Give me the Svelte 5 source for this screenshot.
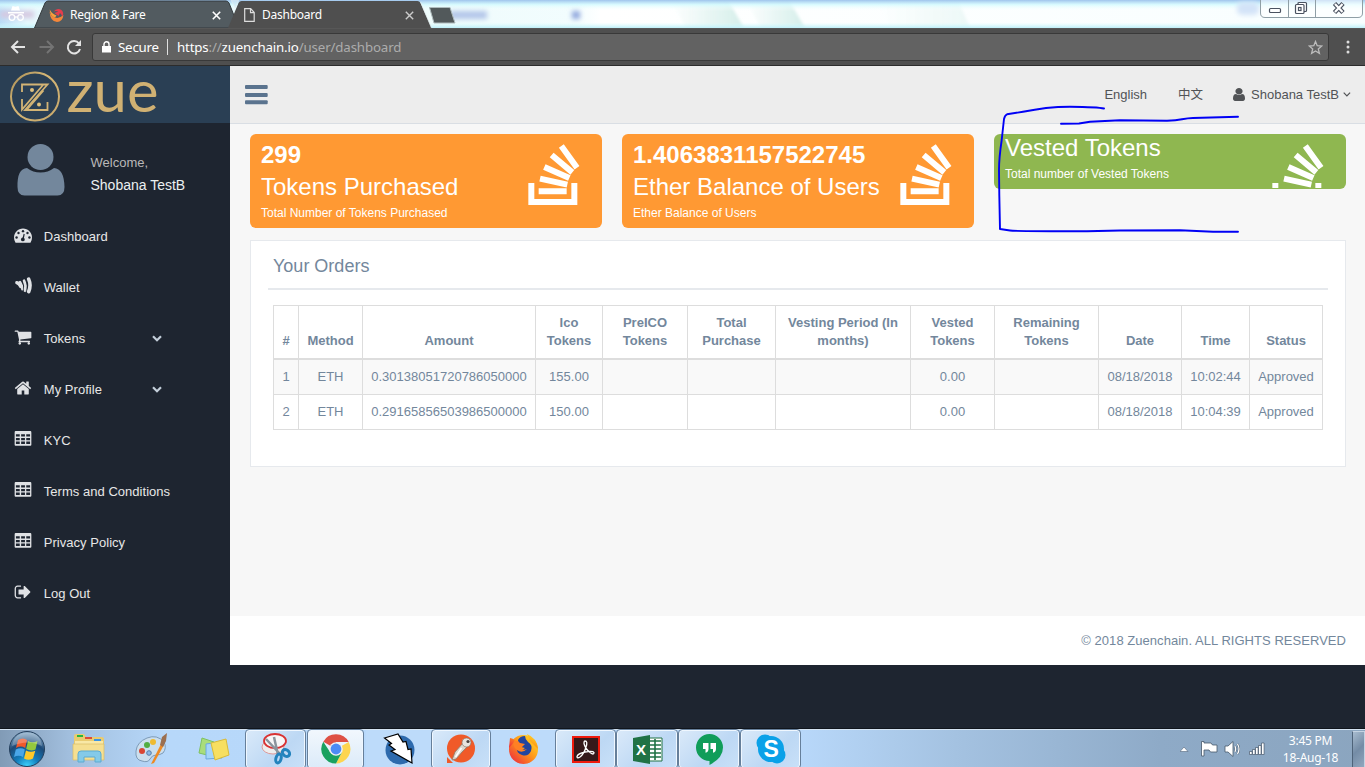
<script>
  const menu = [
    { label: 'Dashboard', icon: 'dash' },
    { label: 'Wallet', icon: 'wallet' },
    { label: 'Tokens', icon: 'cart', more: true },
    { label: 'My Profile', icon: 'home', more: true },
    { label: 'KYC', icon: 'table' },
    { label: 'Terms and Conditions', icon: 'table' },
    { label: 'Privacy Policy', icon: 'table' },
    { label: 'Log Out', icon: 'out' }
  ];
  const cards = [
    { value: '299', title: 'Tokens Purchased', note: 'Total Number of Tokens Purchased' },
    { value: '1.4063831157522745', title: 'Ether Balance of Users', note: 'Ether Balance of Users' },
    { title: 'Vested Tokens', note: 'Total number of Vested Tokens', green: true }
  ];
  const columns = [
    ['#', 26], ['Method', 64], ['Amount', 173], ['Ico Tokens', 67], ['PreICO Tokens', 85], ['Total Purchase', 88],
    ['Vesting Period (In months)', 135], ['Vested Tokens', 84], ['Remaining Tokens', 104], ['Date', 83], ['Time', 68], ['Status', 73]
  ];
  const rows = [
    ['1', 'ETH', '0.30138051720786050000', '155.00', '', '', '', '0.00', '', '08/18/2018', '10:02:44', 'Approved'],
    ['2', 'ETH', '0.29165856503986500000', '150.00', '', '', '', '0.00', '', '08/18/2018', '10:04:39', 'Approved']
  ];
  const userPath = 'M1536 1399q0 109-62.5 187t-150.5 78h-854q-88 0-150.5-78t-62.5-187q0-85 8.5-160.5t31.5-152 58.5-131 94-89 134.5-34.5q131 128 313 128t313-128q76 0 134.5 34.5t94 89 58.5 131 31.5 152 8.5 160.5zm-256-887q0 159-112.5 271.5t-271.5 112.5-271.5-112.5-112.5-271.5 112.5-271.5 271.5-112.5 271.5 112.5 112.5 271.5z';
</script>

<div class="screen">
  <div class="strip">
    <svg class="shapes" width="1365" height="28" viewBox="0 0 1365 28">
      <defs>
        <linearGradient id="sky" x1="0" x2="1" y1="0" y2="0">
          <stop offset="0" stop-color="#b9dcf7" /><stop offset=".02" stop-color="#e6f8fd" /><stop offset=".3" stop-color="#eefbfb" />
          <stop offset=".42" stop-color="#f2fdfe" /><stop offset=".44" stop-color="#fff" /><stop offset="1" stop-color="#f8feff" />
        </linearGradient>
        <linearGradient id="edge" x1="0" x2="0" y1="0" y2="1">
          <stop offset="0" stop-color="#9fc4ec" /><stop offset=".17" stop-color="#d2fbff" stop-opacity=".8" /><stop offset=".4" stop-color="#fff" stop-opacity="0" />
          <stop offset=".8" stop-color="#d8ffff" stop-opacity="0" /><stop offset="1" stop-color="#bdeef8" />
        </linearGradient>
        <linearGradient id="ray" x1="0" x2="1" y1="0" y2="0"><stop offset="0" stop-color="#d5eeea" stop-opacity="0" /><stop offset="1" stop-color="#d5eeea" /></linearGradient>
        <filter id="soft" x="-20%" y="-60%" width="140%" height="220%"><feGaussianBlur stdDeviation="2.4" /></filter>
        <filter id="haze"><feGaussianBlur stdDeviation="1.5" /></filter>
      </defs>
      <rect width="1365" height="28" fill="url(#sky)" />
      <g filter="url(#haze)"><path d="M670 0h58l16 28h-58z" fill="url(#ray)" /><path d="M745 0h44l16 28h-44z" fill="url(#ray)" /><path d="M878 0l12 28h80L958 0z" fill="url(#ray)" opacity=".4" /></g>
      <rect width="1365" height="28" fill="url(#edge)" />
      <g filter="url(#soft)"><rect x="450" y="11" width="37" height="8" fill="#b3c6e9" /><rect x="572" y="11" width="8" height="8" fill="#8fa6dd" /><rect x="0" y="11" width="34" height="7" fill="#d5c8e0" /><rect x="1237" y="2" width="22" height="13" rx="5" fill="#d3e3f8" /></g>
      <path d="M34.500 28 45 3q1-2 3-2h178q2 0 3 2l10 25z" fill="#525b60" stroke="#33393c" />
      <path d="M228 28 238.500 3q1-2 3-2h176q2 0 3 2l11 25z" fill="#4f4f4f" />
      <path d="M231 0l4.500 8 3-8zM420.500 2 431.500 28" fill="#cfe9f5" stroke="#e4eef0" stroke-width="1" opacity=".75" />
      <path d="M429.500 7.500h20.500l5 15.500h-21z" fill="#52595b" stroke="#aebbbd" />
      <g fill="#fff"><path d="M11 10.500 12.500 6l3 .8 3-.8 1.500 4.500zM8 12h16v1.500H8z" /><g fill="none" stroke="#fff" stroke-width="1.300"><circle cx="12" cy="17.500" r="2.800" /><circle cx="20.500" cy="17.500" r="2.800" /><path d="M15 17h2.500" /></g></g>
    </svg>
    <div class="tab first">
      <svg width="15" height="15" viewBox="0 0 15 15"><path d="M.5 3Q1.500 8 6 9.500q4 1.500 8.500-2.500Q13.500 14 8 14 1 13.500.5 3z" fill="#f4873a" /><path d="M.7 1.500Q3 6 7.500 7.500L6 9.500Q1 8 .7 1.500z" fill="#f8a13b" /><path d="M4.500 3.500Q8-.8 12.500 2q3 3 .7 6.500Q12.500 6 11 5l-1.500 3L5.500 5l4-1.500q-3-.8-5 0z" fill="#e63d4d" /></svg>
      <span>Region &amp; Fare</span>
      <svg class="x" width="9" height="9" viewBox="0 0 9 9"><path d="m.8.8 7.400 7.400M8.200.8.800 8.200" stroke="#fff" stroke-width="1.600" /></svg>
    </div>
    <div class="tab second">
      <svg width="11" height="14" viewBox="0 0 11 14"><path d="M.7.700h6l3.500 3.800v8.800H.7zM6.500.7v4h3.700" fill="none" stroke="#ddd" stroke-width="1.200" /></svg>
      <span>Dashboard</span>
      <svg class="x" width="9" height="9" viewBox="0 0 9 9"><path d="m.8.8 7.400 7.400M8.200.8.800 8.200" stroke="#ccc" stroke-width="1.400" /></svg>
    </div>
    <svg class="controls" width="104" height="19" viewBox="0 0 104 19">
      <path d="M.5 0v13q0 4.500 4.500 4.500h93q4.500 0 4.500-4.500V0M28.500 0v17M55.500 0v17" fill="#fff" fill-opacity=".5" stroke="#8f9fa6" />
      <rect x="9.500" y="8.500" width="11" height="4" rx="1" fill="#fff" stroke="#4a5260" stroke-width="1.200" />
      <g fill="#fff" stroke="#4a5260" stroke-width="1.200"><rect x="38" y="2.500" width="8.500" height="9" rx="1" /><rect x="35.500" y="4.500" width="8.500" height="9" rx="1" /><rect x="38.500" y="7.500" width="2.500" height="3" /></g>
      <path d="m74.500 3.500 8.500 9M83 3.500l-8.500 9" stroke="#4a5260" stroke-width="4.600" /><path d="m75 4 7.500 8M82.500 4 75 12" stroke="#fff" stroke-width="2.200" />
    </svg>
  </div>

  <div class="toolbar">
    <svg width="82" height="18" viewBox="0 0 82 18" fill="none" stroke-width="2">
      <path d="M25 9H12.500M18 3l-6 6 6 6" stroke="#e4e4e4" /><path d="M39.500 9H52M47 3l6 6-6 6" stroke="#747474" />
      <path d="M79 5.500A6.200 6.200 0 1 0 80 11" stroke="#e4e4e4" /><path d="M81 2v6h-6z" fill="#e4e4e4" />
    </svg>
    <div class="url">
      <svg width="9" height="12" viewBox="0 0 9 12"><path d="M0 5h9v6.500H0z" fill="#fff" /><path d="M2 5V3.300a2.500 2.500 0 0 1 5 0V5" fill="none" stroke="#fff" stroke-width="1.400" /></svg>
      <span class="secure">Secure</span><i></i>
      <span class="address">https<em>://</em>zuenchain.io<em>/user/dashboard</em></span>
      <svg class="star" width="15" height="15" viewBox="0 0 15 15"><path d="m7.500 1.500 1.700 4.200 4.600.3-3.500 2.900 1.100 4.400-3.900-2.400-3.900 2.400 1.100-4.400L1.200 6l4.600-.3z" fill="none" stroke="#bdbdbd" stroke-width="1.300" /></svg>
    </div>
    <svg width="4" height="14" viewBox="0 0 4 14" fill="#ddd"><circle cx="2" cy="2" r="1.500" /><circle cx="2" cy="7" r="1.500" /><circle cx="2" cy="12" r="1.500" /></svg>
  </div>

  <div class="app">
    <aside>
      <div class="brand">
        <svg width="170" height="57" viewBox="0 0 170 57">
          <defs><linearGradient id="gold" x1="0" x2="1" y1="0" y2="1"><stop offset="0" stop-color="#a88d54" /><stop offset=".4" stop-color="#d5b676" /><stop offset="1" stop-color="#c8a96b" /></linearGradient></defs>
          <circle cx="35" cy="30.500" r="24" fill="none" stroke="url(#gold)" stroke-width="2" />
          <g fill="none" stroke="#d3b475" stroke-width="1.800"><path d="M22 26v-7.500h25.500L25 44h22.500v-8M43 19 22 43.500V33" /><path d="M43.500 24.500 27 43.500" /></g>
          <g fill="#e0c17e"><circle cx="32" cy="24" r="2" /><circle cx="39" cy="38.500" r="2" /></g>
          <text x="66.500" y="46" textLength="92" lengthAdjust="spacingAndGlyphs">zue</text>
        </svg>
      </div>
      <div class="profile">
        <svg width="48" height="53" viewBox="0 0 48 53" fill="#73879c"><circle cx="23.500" cy="13" r="13" /><path d="M10 24q6 4.500 13.500 4.500T37 24q10 .5 10.500 19 0 8.500-7 8.500h-33q-7 0-7-8.500Q0 24.500 10 24z" /></svg>
        <div><p>Welcome,</p><strong>Shobana TestB</strong></div>
      </div>
      <nav>
        {#each menu as item}
          <div class="item">
            <svg class="ico" width="18" height="18" viewBox="0 0 1792 1792" fill="#e0e2e5">
              {#if item.icon === 'dash'}
                <path d="M1792 1152q0 261-141 483-19 29-54 29h-1402q-35 0-54-29-141-221-141-483 0-182 71-348t191-286 286-191 348-71 348 71 286 191 191 286 71 348z" />
                <g fill="#1e2530"><circle cx="256" cy="1152" r="120" /><circle cx="448" cy="704" r="120" /><circle cx="896" cy="512" r="120" /><circle cx="1344" cy="704" r="120" /><circle cx="1536" cy="1152" r="120" /><circle cx="880" cy="1340" r="185" /><path d="m830 1300 130-520 110 30-110 520z" /></g>
              {:else if item.icon === 'wallet'}
                <g fill="none" stroke="#e0e2e5" stroke-linecap="round"><path d="M1460 210q270 620 0 1250" stroke-width="360" /><path d="M1000 370q230 520 100 1000" stroke-width="270" /><path d="M600 500q240 330 230 720" stroke-width="240" /><path d="M270 560q240 60 390 390" stroke-width="310" /></g>
                <g fill="none" stroke="#1e2530" stroke-width="45"><path d="M1190 190q290 620 0 1350M790 360q260 500 130 1060" /></g>
              {:else if item.icon === 'cart'}
                <path d="M704 1536q0 52-38 90t-90 38-90-38-38-90 38-90 90-38 90 38 38 90zm896 0q0 52-38 90t-90 38-90-38-38-90 38-90 90-38 90 38 38 90zm128-1088v512q0 24-16.500 42.500t-40.500 21.500l-1044 122q13 60 13 70 0 16-24 64h920q26 0 45 19t19 45-19 45-45 19h-1024q-26 0-45-19t-19-45q0-11 8-31.500t16-36 21.500-40 15.500-29.500l-177-823h-204q-26 0-45-19t-19-45 19-45 45-19h256q16 0 28.500 6.500t19.500 15.500 13 24.500 8 26 5.500 29.500 4.500 26h1201q26 0 45 19t19 45z" />
              {:else if item.icon === 'home'}
                <path d="M1472 992v480q0 26-19 45t-45 19h-384v-384h-256v384h-384q-26 0-45-19t-19-45v-480q0-1 .5-3t.5-3l575-474 575 474q1 2 1 6zm223-69l-62 74q-8 9-21 11h-3q-13 0-21-7l-692-577-692 577q-12 8-24 7-13-2-21-11l-62-74q-8-10-7-23.500t11-21.500l719-599q32-26 76-26t76 26l244 204v-195q0-14 9-23t23-9h192q14 0 23 9t9 23v408l219 182q10 8 11 21.500t-7 23.500z" />
              {:else if item.icon === 'table'}
                <path fill-rule="evenodd" d="M160 110h1472q96 0 96 130v1240q0 98-96 98h-1472q-96 0-96-98v-1240q0-130 96-130zM192 430v220h380v-220zM710 430v220h380v-220zM1220 430v220h380v-220zM192 790v220h380v-220zM710 790v220h380v-220zM1220 790v220h380v-220zM192 1150v250h380v-250zM710 1150v250h380v-250zM1220 1150v250h380v-250z" />
              {:else}
                <path d="M704 1440q0 4 1 20t.5 26.500-3 23.500-10 19.500-20.500 6.500h-320q-119 0-203.500-84.500t-84.500-203.500v-704q0-119 84.500-203.500t203.500-84.500h320q13 0 22.500 9.500t9.500 22.500q0 4 1 20t.5 26.500-3 23.500-10 19.500-20.500 6.500h-320q-66 0-113 47t-47 113v704q0 66 47 113t113 47h312l11.500 1 11.500 3 8 5.500 7 9 2 13.500zm928-544q0 26-19 45l-544 544q-19 19-45 19t-45-19-19-45v-288h-448q-26 0-45-19t-19-45v-384q0-26 19-45t45-19h448v-288q0-26 19-45t45-19 45 19l544 544q19 19 19 45z" />
              {/if}
            </svg>
            <span>{item.label}</span>
            {#if item.more}<svg class="chev" width="10" height="7" viewBox="0 0 10 7"><path d="m1 1.200 4 4 4-4" fill="none" stroke="#c4cfda" stroke-width="2.200" /></svg>{/if}
          </div>
        {/each}
      </nav>
    </aside>

    <main>
      <header>
        <svg width="23" height="20" viewBox="0 0 23 20" fill="#5a738e"><rect width="22.700" height="4" rx="1" /><rect y="8" width="22.700" height="4" rx="1" /><rect y="15.300" width="22.700" height="4" rx="1" /></svg>
        <div class="links">
          <span class="en">English</span><span class="zh">中文</span>
          <span class="who"><svg width="12" height="13" viewBox="256 128 1280 1536" preserveAspectRatio="none" fill="#515356"><path d={userPath} /></svg>Shobana TestB<svg class="down" width="8" height="5" viewBox="0 0 8 5"><path d="m.7.700 3.200 3.200L7.100.7" fill="none" stroke="#515356" stroke-width="1.200" /></svg></span>
        </div>
      </header>
      <section class="content">
        <div class="cards">
          {#each cards as card}
            <div class="card" class:green={card.green}>
              <div class="words">
                {#if card.value}<b>{card.value}</b>{/if}
                <h3>{card.title}</h3>
                <p>{card.note}</p>
              </div>
              <div class="pic">
                <svg width="54" height="64" viewBox="860 54 162 192"><path d="M873 174v57h129v-57" fill="none" stroke="#fff" stroke-width="18" /><g stroke="#fff" stroke-width="18"><path d="M895 198.500h84M899 161l82 18M912 126l75 33M934 90l62 52M963 63l47 65" /></g></svg>
              </div>
            </div>
          {/each}
        </div>
        <div class="panel">
          <h2>Your Orders</h2>
          <table>
            <colgroup>{#each columns as c}<col style="width:{c[1]}px" />{/each}</colgroup>
            <thead><tr>{#each columns as c}<th>{c[0]}</th>{/each}</tr></thead>
            <tbody>{#each rows as r}<tr>{#each r as cell}<td>{cell}</td>{/each}</tr>{/each}</tbody>
          </table>
        </div>
      </section>
      <footer>© 2018 Zuenchain. ALL RIGHTS RESERVED</footer>
    </main>
  </div>

  <div class="taskbar">
    <div class="slot orb">
      <svg width="38" height="38" viewBox="0 0 38 38">
        <defs><radialGradient id="orb" cx=".5" cy="1" r=".95"><stop offset="0" stop-color="#3fd6ff" /><stop offset=".35" stop-color="#127cbb" /><stop offset=".7" stop-color="#1c4a78" /><stop offset="1" stop-color="#7fa3c2" /></radialGradient></defs>
        <circle cx="19" cy="19" r="17.500" fill="url(#orb)" stroke="#243f5c" />
        <path d="M10 10q5-3 9 0l-1.800 8q-4.500-2.800-9.200 0z" fill="#f0592b" /><path d="M20 11q4.500 2.500 9.500 0l-2 8.500q-4.500 2-9.300-.5z" fill="#94c83d" /><path d="M7.800 19.500q5-2.500 9 0L15 27q-4.500-2.500-9 0z" fill="#4aa6e8" /><path d="M18 20.500q4.500 2.500 9.300.3L25 28.500q-4.500 2.500-9 0z" fill="#ffc928" />
        <path d="M4 16Q6 3 19 2.500T34 16q-14-7-30 0z" fill="#fff" opacity=".25" />
      </svg>
    </div>
    <div class="slot">
      <svg width="34" height="32" viewBox="0 0 34 32"><path d="M2 3q0-2 2-2h8l2 3h16q2 0 2 2v20H2z" fill="#e9cb70" /><path d="M3 8h28v19H3z" fill="#f8e8a6" /><path d="M5 2h6v2H5z" fill="#25b640" /><path d="M13 4h7v2h-7z" fill="#dd4b38" /><path d="M22 6h7v2h-7z" fill="#3893e5" /><path d="M1 11h31v16H1z" fill="#f5df91" stroke="#dabc64" stroke-width=".7" /><path d="M6 29v-8q0-3 3-3h17q3 0 3 3v8h-6v-5H12v5z" fill="#84cae8" stroke="#5cabd1" /></svg>
    </div>
    <div class="slot">
      <svg width="34" height="32" viewBox="0 0 34 32"><path d="M2 18Q3 9 13 5t17 4q3 6-1 11-3 2-7 2t-6 4-8 2q-7-1-6-10z" fill="#cbdfee" stroke="#7d9bb8" /><circle cx="8" cy="18" r="3" fill="#d94634" /><circle cx="13" cy="12" r="3" fill="#52ad42" /><circle cx="19" cy="9" r="3" fill="#efbb30" /><circle cx="15" cy="20" r="2.300" fill="#8cb9e8" stroke="#567da8" /><path d="M17 31 27 11l3 1-10 18z" fill="#ed8a25" /><path d="m26 12 2-8 5-4-1 8-3 6z" fill="#9b6f50" /></svg>
    </div>
    <div class="slot">
      <svg width="34" height="30" viewBox="0 0 34 30"><path d="m5 4 12 4-3 14-12-3z" fill="#a9dd7b" stroke="#7fc262" /><path d="m9 10 14-2 2 16-16 1z" fill="#a3d5fa" stroke="#6da9df" /><path d="m14 9 15-4 3 16-14 5z" fill="#f7df60" stroke="#d8ba3a" /></svg>
    </div>
    <div class="slot btn">
      <svg width="34" height="34" viewBox="0 0 34 34"><ellipse cx="14" cy="15" rx="11" ry="7" fill="#eee" stroke="#d99" /><ellipse cx="16" cy="9" rx="11" ry="7" fill="#f7f7f7" stroke="#d93232" stroke-width="1.800" /><path d="m7 7 15 16M15 5l4 18" stroke="#8b949c" stroke-width="2.500" /><g fill="none" stroke="#2383bd" stroke-width="3"><ellipse cx="27" cy="21" rx="4" ry="3" transform="rotate(40 27 21)" /><ellipse cx="19.500" cy="26.500" rx="2.600" ry="4.500" transform="rotate(15 19.500 26.500)" /></g></svg>
    </div>
    <div class="slot btn on">
      <svg width="30" height="30" viewBox="0 0 30 30"><path d="M15 15 2.300 7.700A14.500 14.500 0 0 1 27.700 8H15z" fill="#de5145" /><path d="M15 15 27.700 8A14.500 14.500 0 0 1 15 29.500L21 18z" fill="#fdd54f" /><path d="M15 15 21 18 15 29.500A14.500 14.500 0 0 1 2.300 7.700L9 18z" fill="#19a15f" /><circle cx="15" cy="15" r="6.800" fill="#f1f1f1" /><circle cx="15" cy="15" r="5.400" fill="#4c8bf5" /></svg>
    </div>
    <div class="slot pale">
      <svg width="34" height="34" viewBox="0 0 34 34"><circle cx="18" cy="18" r="14.500" fill="#2d6aad" /><path d="m2.500 6 13.500-4 5 8 3-.5 2 8 3-.5 1 14L9 19l4-1.500-6-4.500 2.500-1.500z" fill="#fff" stroke="#000" stroke-width="1.200" /></svg>
    </div>
    <div class="slot btn">
      <svg width="30" height="32" viewBox="0 0 30 32"><circle cx="15" cy="15.500" r="14" fill="#f05a28" /><path d="M1 24v6h6z" fill="#f05a28" /><path d="m17 10 4 4-5 5-6 7-4 1 3-8z" fill="#ded8ce" stroke="#8e7867" stroke-width=".8" /><circle cx="20.500" cy="9.500" r="4.500" fill="#e7e4de" stroke="#8a7668" stroke-width=".7" /><circle cx="22" cy="8.500" r="1.600" fill="#4a4340" /><path d="m15.500 15-6 9" stroke="#fff" stroke-width="1.500" /></svg>
    </div>
    <div class="slot pale">
      <svg width="31" height="32" viewBox="0 0 31 32"><defs><linearGradient id="fox" x1="1" x2="0" y1="0" y2="1"><stop offset="0" stop-color="#ffe92e" /><stop offset=".45" stop-color="#ff9a18" /><stop offset="1" stop-color="#eb1c43" /></linearGradient></defs><circle cx="15.500" cy="16.500" r="14.500" fill="url(#fox)" /><path d="M2 5q3 0 5 3l-6 7zM19 1q10 4 11 15l-8-8z" fill="url(#fox)" /><path d="M10 7q2-4 7-4 0 3 3 6 5 3 3 9-3 6-9 4-6-2-5-7 4 4 8 0-7-1-7-8z" fill="#22459f" /><path d="M6 8q4-1 6 2l5 1-4 4q2 3 6 1-5 5-10 1t-3-9z" fill="#ff8024" /></svg>
    </div>
    <div class="slot btn">
      <svg width="28" height="27" viewBox="0 0 28 27"><path d="M1 1h26v25H1z" fill="#35191a" stroke="#ef1a0d" stroke-width="2" /><path d="M13 5q3 0 1 6-2 7-6 10-3 2-3-.5 1-3 8-4.500 8-1.500 9 .5 0 3-4 0-5-4-6-9 0-2.500 1-2.500z" fill="none" stroke="#fff" stroke-width="1.300" /></svg>
    </div>
    <div class="slot btn">
      <svg width="31" height="31" viewBox="0 0 31 31"><path d="M16 4h14v23H16z" fill="#fff" stroke="#207245" /><path d="M17 7h12M17 11h12M17 15h12M17 19h12M17 23h12M23 5v21" stroke="#207245" stroke-width="1.600" /><path d="m1 4 17-3v29L1 27z" fill="#207245" /><text x="4" y="20.500" class="xl">X</text></svg>
    </div>
    <div class="slot btn">
      <svg width="29" height="33" viewBox="0 0 29 33"><path d="M14.500 1a13.500 13.500 0 0 0 0 27v4Q28 25 28 14.500A13.500 13.500 0 0 0 14.500 1z" fill="#109d59" /><path d="M8 10h5.500v6q0 3-3 3.800V16H8zM15.500 10H21v6q0 3-3 3.800V16h-2.500z" fill="#fff" /></svg>
    </div>
    <div class="slot btn">
      <svg width="30" height="30" viewBox="0 0 30 30"><g fill="#0aa1e8"><circle cx="9" cy="9" r="8.500" /><circle cx="21" cy="21" r="8.500" /><circle cx="15" cy="15" r="13" /></g><text x="7.500" y="23" class="sk">S</text></svg>
    </div>
    <div class="tray">
      <svg width="80" height="20" viewBox="0 0 80 20"><path d="m0 12.500 4-4.500 4 4.500z" fill="#fff" stroke="#53657a" stroke-width=".6" /><path d="M21.500 2.500V17h2.500v-6H29l1.500 2H37V6h-4.500L31 4h-7V2.500z" fill="#fff" stroke="#46586b" stroke-width=".8" /><path d="M45 7h3l5-4.500v15L48 13h-3z" fill="#fff" stroke="#46586b" stroke-width=".8" /><path d="M55 7q1.500 3 0 6M57.500 5q3 5 0 10" fill="none" stroke="#46586b" stroke-width="2.200" /><path d="M55 7q1.500 3 0 6M57.500 5q3 5 0 10" fill="none" stroke="#fff" stroke-width="1.300" /></svg>
      <svg class="net" width="16" height="14" viewBox="0 0 16 14" fill="#fff" stroke="#46586b" stroke-width=".7"><path d="M.500 9.500h2.600v3H.5zM3.500 7.500h2.600v5H3.500zM6.500 5.500h2.600v7H6.500zM9.500 3.500h2.600v9H9.500zM12.500 1h2.600v11.500h-2.600z" /></svg>
      <div class="clock"><span>3:45 PM</span><span>18-Aug-18</span></div>
      <div class="peek"></div>
    </div>
  </div>

  <svg class="ink" width="1365" height="767" viewBox="0 0 1365 767">
    <path d="M1104 108.500Q1098 107 1070 106.700 1058 106.700 1046 108 1035 109.500 1023 111.700L1007 114.300Q1005 115 1004 119L1001.700 140Q999 158 999 170L999.300 195 1000 229 1010 230.500Q1015 231.300 1087 231.300L1120 230.500 1180 230.300 1213 231.700H1238" />
    <path d="M1061 123.700 1079 123.500 1090 121.700 1120 120.300 1167 120.700Q1176 120.500 1182 119.300T1193 118L1220 117.300 1238 116.700" />
  </svg>
</div>

<style>
  :global(body) { margin: 0; overflow: hidden; }
  .screen { position: relative; width: 1365px; height: 767px; display: flex; flex-direction: column; overflow: hidden; background: #1e2530; font: 13px/18px "Liberation Sans", Arial, sans-serif; }
  .screen * { box-sizing: border-box; }
  svg { display: block; flex: none; }
  p, h2, h3 { margin: 0; }
  .strip { position: relative; height: 28px; display: flex; }
  .shapes { position: absolute; left: 0; top: 0; }
  .tab { position: relative; display: flex; align-items: center; height: 28px; padding-top: 2px; color: #fff; font: 12px/16px "Noto Sans", sans-serif; letter-spacing: -.25px; }
  .first { margin-left: 49px; width: 193px; }
  .first span { margin-left: 6px; }
  .second { width: 187px; padding-left: 2px; }
  .second span { margin-left: 7px; }
  .tab .x { margin-left: auto; margin-right: 21px; }
  .second .x { margin-right: 15px; }
  .controls { position: relative; margin-left: auto; margin-right: 1px; }
  .toolbar { height: 38px; padding: 0 15px 0 0; display: flex; align-items: center; background: #4f4f4f; border-bottom: 1px solid #2c2c2c; border-top: 1px solid #575757; }
  .url { display: flex; align-items: center; width: 1238px; height: 28px; margin: 0 17px 0 10px; padding: 0 5px 0 9px; border: 1px solid #393939; border-radius: 3px; background: #626262; color: #fff; font: 13.300px/20px "Noto Sans", sans-serif; }
  .secure { margin-left: 7px; letter-spacing: -.2px; white-space: nowrap; }
  .url i { width: 1px; height: 16px; background: #e0e0e0; margin: 0 9px 0 8px; }
  .address { letter-spacing: -.15px; }
  em { font-style: normal; color: #acacac; }
  .star { margin-left: auto; }
  .app { height: 599px; display: flex; }
  aside { width: 230px; color: #e7e7e7; }
  .brand { height: 57px; background: #2a3f54; }
  .brand svg { overflow: visible; }
  .brand text { font: 400 58px Lato, sans-serif; fill: #d0b173; }
  .profile { display: flex; padding: 20px 0 0 16.500px; height: 87px; }
  .profile svg { margin-top: .500px; }
  .profile div { padding-top: 8px; margin-left: 26px; }
  .profile p { color: #bab8b8; line-height: 23px; }
  .profile strong { display: block; font-weight: 400; font-size: 14px; color: #ecf0f1; line-height: 23px; }
  .item { height: 51px; display: flex; align-items: center; padding-left: 14.500px; position: relative; }
  .item span { margin-left: 11.800px; padding-top: 2px; width: 108px; white-space: nowrap; letter-spacing: .03px; }
  .ico { margin-top: -2px; margin-left: -.500px; }
  .chev { margin-top: 1px; }
  main { width: 1135px; display: flex; flex-direction: column; background: #f7f7f7; }
  header { height: 58px; display: flex; align-items: center; justify-content: space-between; padding: 0 14px 0 15px; background: #ededed; border-bottom: 1px solid #d9dee4; color: #515356; }
  .links { display: flex; align-items: center; }
  .zh { margin: -2px 30px 0 31px; font: 12.500px/18px "Noto Sans CJK SC", sans-serif; }
  .who { display: flex; align-items: center; }
  .who svg { margin-right: 6px; }
  .who .down { margin: 0 0 0 4px; }
  .content { height: 492px; padding: 10px 19px 0 20px; }
  .cards { height: 106px; display: grid; grid-template-columns: repeat(3, 352px); column-gap: 20px; align-items: start; }
  .card { height: 94px; display: flex; justify-content: space-between; border-radius: 6px; background: #ff9933; color: #fff; overflow: hidden; padding-left: 11px; }
  .card b { display: block; font-size: 24px; line-height: 26px; height: 37px; padding-top: 8px; }
  .card h3 { font-weight: 400; font-size: 24px; line-height: 32px; height: 33px; white-space: nowrap; }
  .card p { font-size: 12px; line-height: 18px; }
  .card.green { height: 55px; background: #8fb750; }
  .card.green h3 { line-height: 28px; height: 31px; }
  .pic { padding: 9px 21px 0 0; height: 54px; }
  .card:not(.green) .pic { height: 94px; }
  .green .pic { overflow: hidden; }
  .panel { height: 227px; border: 1px solid #e6e9ed; background: #fff; padding: 10px 17px; color: #73879c; }
  h2 { height: 39px; padding: 3px 5px; border-bottom: 2px solid #e6e9ed; font-weight: 400; font-size: 18px; line-height: 24px; }
  table { width: 1050px; margin: 15px 0 0 5px; table-layout: fixed; border-spacing: 0; border-top: 1px solid #ddd; text-align: center; }
  th, td { border-right: 1px solid #ddd; padding: 0; }
  th:first-child, td:first-child { border-left: 1px solid #ddd; }
  th { height: 54px; padding: 8px 7px; border-bottom: 2px solid #ddd; vertical-align: bottom; }
  td { height: 35px; border-bottom: 1px solid #ddd; white-space: nowrap; }
  tbody tr:first-child { background: #f9f9f9; }
  footer { height: 49px; background: #fff; color: #73879c; text-align: right; padding: 16px 19px 0 0; letter-spacing: .04px; }
  .taskbar { margin-top: 64px; height: 38px; display: grid; grid-template-columns: 58px 62px 62px 63px 61px 60px 65px 60px 64px 61px 62px 62px 61px 1fr; border-top: 1px solid #d5e4f2; background: linear-gradient(90deg, #819bb6, #a1bedd 5%, #b7d8fa 12%, #b9d9fb 58%, #a4c2e1 70%, #8eaac7 85%, #8ba5bf); box-shadow: 0 -1px #10151c; }
  .slot { display: flex; align-items: center; justify-content: center; min-width: 0; }
  .orb { padding-right: 4px; }
  .btn { margin: 0 1px; border: 1px solid #eff7ff; outline: 1px solid #667f9a; border-radius: 3px; background: linear-gradient(135deg, #d9e9f9, #bdd8f4 60%, #c8e0f8); }
  .on { margin: 0 3px 0 2px; background: linear-gradient(#f1f7fd, #dcebf9); }
  .pale { background: #bddbfa; }
  .xl { font: bold 15px "Liberation Sans", sans-serif; fill: #fff; }
  .sk { font: bold 23px "Liberation Sans", sans-serif; fill: #fff; }
  .tray { display: flex; align-items: center; justify-content: flex-end; }
  .net { margin-left: -11px; }
  .clock { width: 87px; display: flex; flex-direction: column; align-items: center; color: #fff; font: 12px/17px "Noto Sans", sans-serif; letter-spacing: -.25px; padding-left: 4px; }
  .peek { width: 13px; height: 37px; border: 1px solid #c4d3e2; border-left-color: #4e6379; background: linear-gradient(135deg, #a8bccf, #748ca6 50%, #91a7be); }
  .ink { position: absolute; left: 0; top: 0; pointer-events: none; fill: none; stroke: #0000f5; stroke-width: 1.900; stroke-linecap: round; stroke-linejoin: round; }
</style>
